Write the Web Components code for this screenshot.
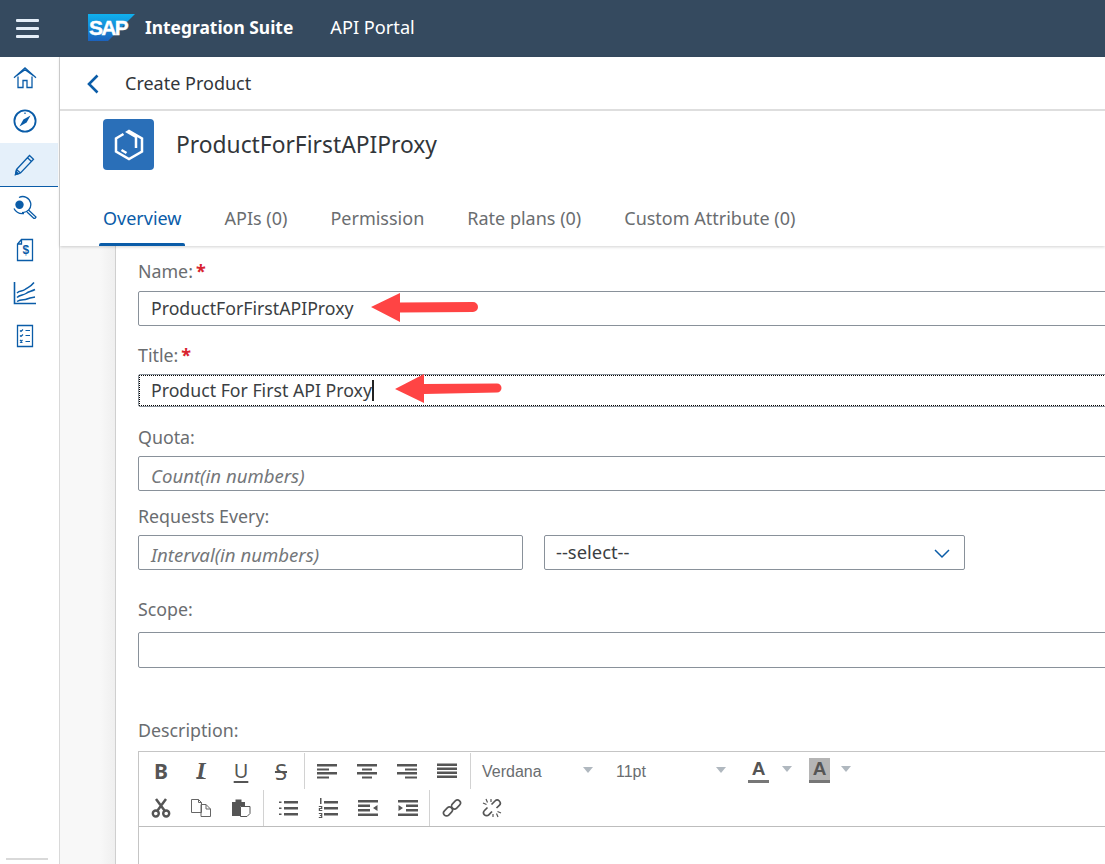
<!DOCTYPE html>
<html>
<head>
<meta charset="utf-8">
<title>Create Product</title>
<style>
  html, body { margin: 0; padding: 0; height: 100%; overflow: hidden; background: #fff; }
  body { font-family: "Noto Sans", "Open Sans", sans-serif; color: #32363a; }
</style>
</head>
<body>
<api-portal></api-portal>

<script>
const NAV_ICONS = {
  home: '<path d="M1 11.800 12 1.800l11 10M3.500 9.800 12 3.800l8.500 6M5 10.500v11h5v-7h4v7h5v-11"/>',
  compass: '<circle cx="12" cy="12" r="10.600" stroke-width="1.800"/><path d="M17.500 6.500 13.600 13.600 6.500 17.500 10.400 10.400z" fill="currentColor" stroke="none"/><path d="M12 3.500v1.600"/>',
  pencil: '<path d="M3.500 17.500 16.500 3.500l4 3.800L7.500 21l-5 1.500zM14.500 5.700l4 3.800M3.500 17.500l4 3.500"/><path d="M2.500 22.500l.6-3 2.400 2.200z" fill="currentColor"/>',
  search: '<path d="M6 2.500a8 8 0 1 1 3 15"/><circle cx="6.500" cy="9.800" r="4.200" fill="currentColor" stroke="none"/><path d="M15.500 15 23 22l-1.500 2-7.500-7"/><path d="M1 13.500c2 4 6 5.500 10 5"/>',
  invoice: '<path d="M8.500 1.500h11v21h-15V6zM8.500 1.500V6h-4"/><text x="12.800" y="16" font-family="Liberation Sans" font-weight="700" font-size="12" fill="currentColor" stroke="none" text-anchor="middle">$</text>',
  chart: '<path d="M1.500 1v21.500H23" stroke-width="1.600"/><path d="M4 12c3-3 5-1 8-3.500s5-2 9-7M4 16.500c3-3 6-2 9-4s5-2 9-4M4 20.500c4-3 7-1 10-2.500s4-1.500 8-2" stroke-width="1.500"/>',
  checklist: '<path d="M4.500 1.500h15v21h-15z"/><path d="M7 6.500l1 1 2-2M7 11.500l1 1 2-2M7 16l2.500 2.500M9.500 16 7 18.500M12.500 6.500h4.500M12.500 11.500h4.500M12.500 17.500h4.500" stroke-width="1.100"/>'
};

class ShellBar extends HTMLElement {
  constructor() {
    super();
    this.attachShadow({ mode: 'open' });
  }
  connectedCallback() {
    this.shadowRoot.innerHTML = `
      <style>
        :host { display: flex; align-items: center; height: 57px; background: #354a5f; color: #fff; flex: none; }
        .menu { width: 23px; margin-left: 16px; display: flex; flex-direction: column; gap: 5px; }
        .menu i { display: block; height: 3px; background: #e4eef8; border-radius: 1px; }
        .logo { margin-left: 49px; width: 47px; height: 27px; margin-top: -3px; display: block; }
        .brand { margin-left: 10px; font-size: 17.400px; font-weight: 700; margin-top: -4px; }
        .app { margin-left: 37px; font-size: 18.200px; margin-top: -4px; }
      </style>
      <div class="menu"><i></i><i></i><i></i></div>
      <svg class="logo" viewBox="0 0 47 27">
        <defs><linearGradient id="sap" x1="0" y1="0" x2="0" y2="1"><stop offset="0" stop-color="#0fb1ee"/><stop offset="1" stop-color="#1c62bd"/></linearGradient></defs>
        <path d="M0 0h47L20 27H0z" fill="url(#sap)"/>
        <text x="1" y="21" font-family="Liberation Sans" font-weight="700" font-size="21" letter-spacing="-1.700" fill="#fff" stroke="#fff" stroke-width=".4">SAP</text>
      </svg>
      <span class="brand">Integration Suite</span>
      <span class="app">API Portal</span>
    `;
  }
}
customElements.define('shell-bar', ShellBar);

class SideNav extends HTMLElement {
  constructor() {
    super();
    this.attachShadow({ mode: 'open' });
  }
  connectedCallback() {
    const items = ['home', 'compass', 'pencil', 'search', 'invoice', 'chart', 'checklist'];
    this.shadowRoot.innerHTML = `
      <style>
        :host { display: flex; flex-direction: column; width: 59px; flex: none; border-right: 1px solid #d9d9d9; background: #fff; }
        .item { height: 43px; width: 58px; display: flex; align-items: center; justify-content: center; color: #0a5ca8; }
        .item.on { background: #e5f0fa; box-shadow: 0 1px 0 #0a5ca8; }
        svg { width: 24px; height: 24px; fill: none; stroke: currentColor; stroke-width: 1.300; margin: -2px 0 0 -8px; }
        .foot { margin-top: auto; margin-bottom: 4px; margin-left: 6px; width: 42px; height: 2px; background: #d9d9d9; }
      </style>
      ${items.map(n => `<div class="item ${n === 'pencil' ? 'on' : ''}"><svg viewBox="0 0 24 24">${NAV_ICONS[n]}</svg></div>`).join('')}
      <div class="foot"></div>
    `;
  }
}
customElements.define('side-nav', SideNav);

class ObjectHeader extends HTMLElement {
  constructor() {
    super();
    this.attachShadow({ mode: 'open' });
  }
  connectedCallback() {
    const tabs = ['Overview', 'APIs (0)', 'Permission', 'Rate plans (0)', 'Custom Attribute (0)'];
    this.shadowRoot.innerHTML = `
      <style>
        :host { display: block; flex: none; background: #fff; box-shadow: 0 1px 3px rgba(0,0,0,.18); position: relative; z-index: 1; }
        .back { height: 54px; box-sizing: border-box; display: flex; align-items: center; border-bottom: 2px solid #dedede; padding-left: 27px; font-size: 18px; }
        .back svg { width: 12px; height: 20px; fill: none; stroke: #0a5ca8; stroke-width: 2.600; margin-top: 2px; }
        .back span { margin-left: 26px; margin-top: -1px; }
        .title { display: flex; align-items: center; padding: 8px 0 0 43px; height: 51px; }
        .tile { width: 51px; height: 51px; border-radius: 4px; background: #2a6fb8; display: flex; align-items: center; justify-content: center; }
        .tile svg { width: 30px; height: 32px; fill: none; stroke: #fff; stroke-width: 2.500; }
        h1 { margin: 0 0 0 22px; font-size: 22.800px; font-weight: 400; }
        .tabs { display: flex; gap: 43px; padding: 35px 0 0 43px; height: 41px; font-size: 18px; color: #6a6d70; }
        .tab { position: relative; line-height: 26px; height: 26px; }
        .tab.on { color: #0a5ca8; }
        .tab.on::after { content: ""; position: absolute; left: -4px; right: -3px; top: 38px; height: 3px; background: #0a5ca8; border-radius: 2px 2px 0 0; }
      </style>
      <div class="back">
        <svg viewBox="0 0 12 20"><path d="M10.500 1.500 2 10l8.500 8.500"/></svg>
        <span>Create Product</span>
      </div>
      <div class="title">
        <div class="tile"><svg viewBox="0 0 30 32"><path d="M9.500 5 2 9.500v13l13 7.500 13-7.500v-13L15 2l-1.500.9L22 8v11M7.500 21l5 3"/></svg></div>
        <h1>ProductForFirstAPIProxy</h1>
      </div>
      <div class="tabs">${tabs.map((t, i) => `<div class="tab ${i === 0 ? 'on' : ''}">${t}</div>`).join('')}</div>
    `;
  }
}
customElements.define('object-header', ObjectHeader);

class FormField extends HTMLElement {
  constructor() {
    super();
    this.attachShadow({ mode: 'open' });
  }
  connectedCallback() {
    const star = this.hasAttribute('required') ? '<b>*</b>' : '';
    this.shadowRoot.innerHTML = `
      <style>
        :host { display: block; margin-top: var(--above, 0); }
        label { display: block; height: 20px; line-height: 20px; font-size: 17.800px; color: #6a6d70; margin-bottom: var(--gap, 9px); }
        b { color: #d8232f; font-weight: 700; font-size: 18px; margin-left: 3px; }
      </style>
      <label>${this.getAttribute('label')}${star}</label>
      <slot></slot>
    `;
  }
}
customElements.define('form-field', FormField);

class TextField extends HTMLElement {
  constructor() {
    super();
    this.attachShadow({ mode: 'open' });
  }
  connectedCallback() {
    const value = this.getAttribute('value');
    const hint = this.getAttribute('placeholder');
    this.shadowRoot.innerHTML = `
      <style>
        :host { display: flex; align-items: center; box-sizing: border-box; height: var(--h, 35px); border: 1px solid #89919a; border-radius: 2px; background: #fff; padding: 0 0 1px 12px; font-size: 17.700px; color: #3a3e42; position: relative; overflow: hidden; }
        :host([focused]) { outline: 1px dotted #000; outline-offset: -2px; }
        .hint { font-style: italic; font-size: 18.600px; color: #74777a; padding-top: 5px; }
        .caret { display: inline-block; width: 2px; height: 21px; background: #222; }
      </style>
      ${value ? `<span>${value}</span>` : ''}
      ${this.hasAttribute('focused') ? '<span class="caret"></span>' : ''}
      ${hint ? `<span class="hint">${hint}</span>` : ''}
    `;
  }
}
customElements.define('text-field', TextField);

class SelectField extends HTMLElement {
  constructor() {
    super();
    this.attachShadow({ mode: 'open' });
  }
  connectedCallback() {
    this.shadowRoot.innerHTML = `
      <style>
        :host { display: flex; align-items: center; justify-content: space-between; box-sizing: border-box; height: 35px; border: 1px solid #89919a; border-radius: 2px; padding: 0 14px 0 11px; font-size: 18.400px; color: #3a3e42; }
        span { margin-top: -3px; }
        svg { width: 16px; height: 10px; fill: none; stroke: #0a5ca8; stroke-width: 1.500; margin-top: 3px; }
      </style>
      <span>${this.getAttribute('value')}</span>
      <svg viewBox="0 0 16 10"><path d="M1 1l7 7 7-7"/></svg>
    `;
  }
}
customElements.define('select-field', SelectField);

const TOOL_ICONS = {
  left: '<path d="M0 3h20v2.500H0zM0 7.500h12V9.500H0zM0 11h20v2.500H0zM0 15.500h12v2H0z"/>',
  center: '<path d="M0 3h20v2.500H0zM5 7.500h10V9.500H5zM0 11h20v2.500H0zM5 15.500h10v2H5z"/>',
  right: '<path d="M0 3h20v2.500H0zM8 7.500h12V9.500H8zM0 11h20v2.500H0zM8 15.500h12v2H8z"/>',
  justify: '<path d="M0 2.500h20v2.500H0zM0 6.500h20v2.500H0zM0 10.500h20v2.500H0zM0 14.500h20v2.500H0z"/>',
  cut: '<path d="M5 1l8.500 11.500M15 1 6.500 12.500" fill="none" stroke="#555" stroke-width="2.500"/><circle cx="4.800" cy="15.500" r="3" fill="none" stroke="#555" stroke-width="2.400"/><circle cx="15.200" cy="15.500" r="3" fill="none" stroke="#555" stroke-width="2.400"/>',
  copy: '<path d="M.5 1.500h7l3 3v10H.5zM10 6.500h5l4.500 4.500v7.500H10z" fill="#fff" stroke="#666" stroke-width="1"/><path d="M7.500 1.500v3h3M15 6.500V11h4.500" fill="none" stroke="#666"/>',
  paste: '<path d="M1 4h3.500V1.500h6V4H14v4H9v10H1z"/><path d="M9.500 8.500h9.500v7l-3 3H9.500z" fill="#fff" stroke="#555"/>',
  bullets: '<path d="M6 3h14v2.500H6zM6 9h14v2.500H6zM6 15h14v2.500H6z"/><path d="M1 3.500h2.500V5H1zM1 9.500h2.500V11H1zM1 15.500h2.500V17H1z"/>',
  numbers: '<path d="M6 3h14v2.500H6zM6 9h14v2.500H6zM6 15h14v2.500H6z"/><path d="M2 0h1.500v6H2zM.8 8h3.500v3H2v1h2.300v1H.8v-3h2.300V9H.8zM.8 15h3.500v5H.8v-1h2.300v-1H1.800v-1h1.300v-1H.8z"/>',
  outdent: '<path d="M0 2h20v2.500H0zM0 6.500h12V9H0zM0 11h12v2.500H0zM0 15.500h20V18H0zM19.500 7v6L15 10z"/>',
  indent: '<path d="M0 2h20v2.500H0zM8 6.500h12V9H8zM8 11h12v2.500H8zM0 15.500h20V18H0zM.5 7v6L5 10z"/>',
  link: '<g fill="none" stroke="#555" stroke-width="1.700"><rect x="1" y="10.500" width="10" height="6" rx="3" transform="rotate(-45 6 13.500)"/><rect x="9" y="3.500" width="10" height="6" rx="3" transform="rotate(-45 14 6.500)"/></g>',
  unlink: '<g fill="none" stroke="#555" stroke-width="1.700"><path d="M5.500 9.500 2.500 12.500a3 3 0 0 0 4.300 4.300L10 13.500M9.500 6.500l3.500-3.500a3 3 0 0 1 4.300 4.300L14.500 10"/><path stroke-width="1.200" d="M4 1l1.500 3.500M1 5l3.500 1.500M16 19l-1.500-3.500M19 15l-3.500-1.500M9 1v3M11 19v-3"/></g>'
};

class EditorToolbar extends HTMLElement {
  constructor() {
    super();
    this.attachShadow({ mode: 'open' });
  }
  icon(name) {
    return `<span class="btn"><svg viewBox="0 0 20 20">${TOOL_ICONS[name]}</svg></span>`;
  }
  connectedCallback() {
    this.shadowRoot.innerHTML = `
      <style>
        :host { display: block; border: 1px solid #c5c5c5; border-bottom: 0; border-right: 0; margin-right: -20px; color: #555; }
        .bar { border-bottom: 1px solid #bdbdbd; height: 74px; }
        .row { display: flex; align-items: center; padding-left: 2px; height: 37px; }
        .btn { width: 40px; height: 37px; display: flex; align-items: center; justify-content: center; flex: none; font-size: 20px; font-family: "Liberation Sans", sans-serif; }
        .btn svg { width: 20px; height: 20px; fill: #555; }
        .sep { width: 1px; height: 36px; background: #d2d2d2; flex: none; }
        .b { font-weight: 700; font-family: "Noto Sans", sans-serif; font-size: 21px; }
        .i { font-style: italic; font-family: "Liberation Serif", serif; font-weight: 700; font-size: 24px; text-decoration: underline; text-decoration-thickness: 1px; text-underline-offset: 0; }
        .u { text-decoration: underline; text-underline-offset: 3px; text-decoration-thickness: 2px; font-family: "Noto Sans", sans-serif; font-size: 20px; }
        .s { text-decoration: line-through; font-family: "Noto Sans", sans-serif; font-size: 22px; }
        .pick { display: flex; align-items: center; justify-content: space-between; font-size: 16px; font-family: "Liberation Sans", sans-serif; color: #6a6d70; flex: none; padding-top: 2px; }
        .caret { width: 0; height: 0; border: 5.500px solid transparent; border-top: 6px solid #b0b8bf; border-bottom: 0; flex: none; margin-top: -3px; }
        .color { width: 21px; flex: none; text-align: center; font: 700 19px/22px "Liberation Sans", sans-serif; color: #555; border-bottom: 3px solid #777; box-sizing: border-box; height: 25px; }
        .color.fill { background: #b5b5b5; }
      </style>
      <div class="bar">
        <div class="row">
          <span class="btn b">B</span><span class="btn i">I</span><span class="btn u">U</span><span class="btn s">S</span>
          <span class="sep" style="margin:0 2px 0 3px"></span>
          ${this.icon('left')}${this.icon('center')}${this.icon('right')}${this.icon('justify')}
          <span class="sep" style="margin-left:3px"></span>
          <span class="pick" style="width:111px;margin-left:11px">Verdana<i class="caret"></i></span>
          <span class="pick" style="width:110px;margin-left:23px">11pt<i class="caret"></i></span>
          <span class="color" style="margin-left:22px">A</span>
          <i class="caret" style="margin-left:13px"></i>
          <span class="color fill" style="margin-left:17px">A</span>
          <i class="caret" style="margin-left:11px"></i>
        </div>
        <div class="row">
          ${this.icon('cut')}${this.icon('copy')}${this.icon('paste')}
          <span class="sep" style="margin:0 4px 0 2px"></span>
          ${this.icon('bullets')}${this.icon('numbers')}${this.icon('outdent')}${this.icon('indent')}
          <span class="sep" style="margin:0 2px 0 1px"></span>
          ${this.icon('link')}${this.icon('unlink')}
        </div>
      </div>
      <div style="height:60px"></div>
    `;
  }
}
customElements.define('editor-toolbar', EditorToolbar);

class ProductForm extends HTMLElement {
  constructor() {
    super();
    this.attachShadow({ mode: 'open' });
  }
  connectedCallback() {
    this.shadowRoot.innerHTML = `
      <style>
        :host { display: block; flex: 1; min-height: 0; background: linear-gradient(90deg, #f8f8f8 0, #f8f8f8 40px, #efefef 55px); overflow: hidden; padding-left: 55px; }
        .panel { background: #fff; border-left: 1px solid #cfcfcf; height: 100%; padding: 15px 0 0 22px; box-sizing: border-box; width: 1100px; position: relative; }
        .pair { display: grid; grid-template-columns: 385px 421px; gap: 21px; }
        .arrow { position: absolute; fill: #ff4444; }
      </style>
      <div class="panel">
        <form-field label="Name:" required style="--gap:10px"><text-field value="ProductForFirstAPIProxy"></text-field></form-field>
        <form-field label="Title:" required style="--above:19px;--h:33px"><text-field value="Product For First API Proxy" focused></text-field></form-field>
        <form-field label="Quota:" style="--above:20px"><text-field placeholder="Count(in numbers)"></text-field></form-field>
        <form-field label="Requests Every:" style="--above:15px">
          <div class="pair">
            <text-field placeholder="Interval(in numbers)"></text-field>
            <select-field value="--select--"></select-field>
          </div>
        </form-field>
        <form-field label="Scope:" style="--above:29px;--gap:13px;--h:36px"><text-field></text-field></form-field>
        <form-field label="Description:" style="--above:52px;--gap:11px"><editor-toolbar></editor-toolbar></form-field>
        <svg class="arrow" style="left:255px;top:46px" width="110" height="32" viewBox="0 0 110 32"><path d="M0 15 29 1v9.500l73-.500a5 5 0 0 1 0 10l-73 .500V30z"/></svg>
        <svg class="arrow" style="left:279px;top:127px" width="110" height="32" viewBox="0 0 110 32"><path d="M0 16 29 1v10l73-.500a4.500 4.500 0 0 1 0 9L29 21v9z"/></svg>
      </div>
    `;
  }
}
customElements.define('product-form', ProductForm);

class ApiPortal extends HTMLElement {
  constructor() {
    super();
    this.attachShadow({ mode: 'open' });
  }
  connectedCallback() {
    this.shadowRoot.innerHTML = `
      <style>
        :host { display: flex; flex-direction: column; height: 864px; width: 1105px; overflow: hidden; }
        .body { display: flex; flex: 1; min-height: 0; }
        .main { flex: 1; min-width: 0; display: flex; flex-direction: column; }
      </style>
      <shell-bar></shell-bar>
      <div class="body">
        <side-nav></side-nav>
        <div class="main">
          <object-header></object-header>
          <product-form></product-form>
        </div>
      </div>
    `;
  }
}
customElements.define('api-portal', ApiPortal);
</script>
</body>
</html>
